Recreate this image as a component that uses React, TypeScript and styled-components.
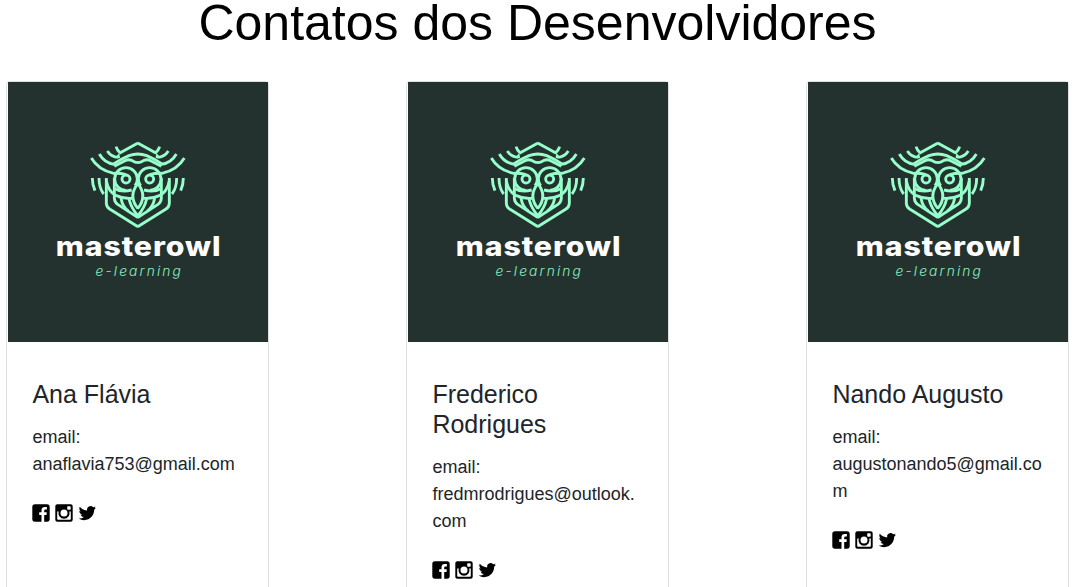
import React from 'react';
import styled, { createGlobalStyle } from 'styled-components';

const GlobalStyle = createGlobalStyle`
  *, *::before, *::after { box-sizing: border-box; }
  html, body { height: 100%; }
  body {
    margin: 0;
    overflow: hidden;
    background: #fff;
    color: #212529;
    font-family: "Liberation Sans", Arial, sans-serif;
  }
`;

const Page = styled.main`
  height: 587px;
  overflow: hidden;
`;

const Title = styled.h1`
  margin: 0;
  padding: 1px 0 0 1px;
  height: 81px;
  font-size: 50px;
  line-height: 44px;
  font-weight: 400;
  text-align: center;
  color: #000;
`;

const CardGrid = styled.section`
  display: grid;
  grid-template-columns: repeat(3, 263px);
  column-gap: 137px;
  padding-left: 6px;
`;

const Card = styled.article`
  height: 560px;
  border: 1px solid #dfdfdf;
  border-radius: 4px 4px 0 0;
`;

const Cover = styled.div`
  display: flex;
  flex-direction: column;
  align-items: center;
  width: 260px;
  height: 260px;
  margin-left: 1px;
  padding-top: 48px;
  background: #23322f;
`;

const OwlSvg = styled.svg`
  display: block;
  width: 120px;
  height: 102px;
  flex: none;
  fill: none;
  stroke: #96ffca;
  stroke-width: 8.6;
`;

const Brand = styled.div`
  height: 30px;
  font: 800 26.5px/29px Inter, sans-serif;
  letter-spacing: 0.8px;
  margin-right: -0.8px;
  white-space: nowrap;
  color: #fff;
  transform: scaleX(1.14);
`;

const Tagline = styled.div`
  height: 18px;
  font: italic 300 13px/18px Inter, sans-serif;
  letter-spacing: 2px;
  margin-right: -2px;
  white-space: nowrap;
  color: #8df2c0;
  transform: scaleX(1.06);
`;

const CardBody = styled.div`
  padding: 37px 25px 0 25.4px;
`;

const Name = styled.h2`
  margin: 0 0 15px;
  font-size: 25px;
  line-height: 30px;
  font-weight: 400;
`;

const Email = styled.p`
  margin: 0 0 26px;
  font-size: 18px;
  line-height: 27px;
  overflow-wrap: anywhere;
`;

const Socials = styled.div`
  display: flex;
  gap: 5px;
`;

const SocialIcon = styled.svg`
  display: block;
  width: 18px;
  height: 18px;
  fill: #000;
`;

const OwlHalf = () => (
  <g>
    <path d="M175 39 L119 70" />
    <path d="M109 50 Q112 60 121 68" />
    <path d="M83 63 Q94 81 116 82" />
    <path d="M106 84 L119 68 L121 84 Z" fill="#96ffca" stroke="none" />
    <path d="M59 72 Q74 99 104 103" />
    <path d="M35 84 Q56 120 102 130 Q122 129 139 134" />
    <path d="M100 103 Q120 89 148 77 Q161 72 175 72" />
    <path d="M104 109 Q120 100 136 92 Q146 87 156 91 Q166 98 175 98" />
    <path d="M173 147 A34 34 0 1 0 139 181" />
    <path d="M173 147 Q173 158 166 167" />
    <circle cx="139" cy="147" r="12" />
    <path d="M38 144 Q38 165 46 182" />
    <path d="M58 144 Q58 174 72 192" />
    <path d="M80 144 V220 Q81 232 91 238 L175 290" />
    <path d="M80 152 Q86 184 108 196 Q130 207 158 205" />
    <path d="M104 144 V205 Q105 217 114 223 L175 263" />
    <path d="M106 176 Q126 188 156 180" />
    <path d="M124 204 Q128 230 146 243" />
    <path d="M148 207 Q154 233 175 258" />
    <path d="M175 160 Q144 198 175 236" />
  </g>
);

const Owl = () => (
  <OwlSvg viewBox="-5 0 360 306">
    <OwlHalf />
    <g transform="translate(349 0) scale(-1 1)">
      <OwlHalf />
    </g>
  </OwlSvg>
);

const Facebook = () => (
  <SocialIcon viewBox="0 0 18 18" aria-label="Facebook">
    <path d="M3 0.3H15Q17.7 .3 17.7 3V15Q17.7 17.7 15 17.7H12.2V11H14.5L14.8 8.3H12.2V6.7Q12.2 5.5 13.4 5.5H14.9V3.1Q14 3 12.9 3Q9.5 3 9.5 6.4V8.3H7.2V11H9.5V17.7H3Q.3 17.7 .3 15V3Q.3 .3 3 .3Z" />
  </SocialIcon>
);

const Instagram = () => (
  <SocialIcon viewBox="0 0 18 18" aria-label="Instagram">
    <path
      fillRule="evenodd"
      d="M2.3 .3H15.7Q17.7 .3 17.7 2.3V15.7Q17.7 17.7 15.7 17.7H2.3Q.3 17.7 .3 15.7V2.3Q.3 .3 2.3 .3ZM2.2 7.5V15Q2.2 15.8 3 15.8H15Q15.8 15.8 15.8 15V7.5H14.2A5.5 5.5 0 1 1 3.8 7.5ZM12.9 2.3Q12.2 2.3 12.2 3V5Q12.2 5.7 12.9 5.7H15Q15.7 5.7 15.7 5V3Q15.7 2.3 15 2.3ZM9 5.5A3.5 3.5 0 1 0 9 12.5A3.5 3.5 0 1 0 9 5.5Z"
    />
  </SocialIcon>
);

const Twitter = () => (
  <SocialIcon viewBox="-0.9 -0.7 25 25" aria-label="Twitter">
    <path d="M23.953 4.57a10 10 0 01-2.825.775 4.958 4.958 0 002.163-2.723c-.951.555-2.005.959-3.127 1.184a4.92 4.92 0 00-8.384 4.482C7.69 8.095 4.067 6.13 1.64 3.162a4.822 4.822 0 00-.666 2.475c0 1.71.87 3.213 2.188 4.096a4.904 4.904 0 01-2.228-.616v.06a4.923 4.923 0 003.946 4.827 4.996 4.996 0 01-2.212.085 4.936 4.936 0 004.604 3.417 9.867 9.867 0 01-6.102 2.105c-.39 0-.779-.023-1.17-.067a13.995 13.995 0 007.557 2.209c9.053 0 13.998-7.496 13.998-13.985 0-.21 0-.42-.015-.63A9.935 9.935 0 0024 4.59z" />
  </SocialIcon>
);

const developers = [
  { name: 'Ana Flávia', email: 'anaflavia753@gmail.com' },
  { name: 'Frederico Rodrigues', email: 'fredmrodrigues@outlook.com' },
  { name: 'Nando Augusto', email: 'augustonando5@gmail.com' },
];

export default function App() {
  return (
    <Page>
      <GlobalStyle />
      <Title>Contatos dos Desenvolvidores</Title>
      <CardGrid>
        {developers.map((dev) => (
          <Card key={dev.email}>
            <Cover>
              <Owl />
              <Brand>masterowl</Brand>
              <Tagline>e-learning</Tagline>
            </Cover>
            <CardBody>
              <Name>{dev.name}</Name>
              <Email>
                email:
                <br />
                {dev.email}
              </Email>
              <Socials>
                <Facebook />
                <Instagram />
                <Twitter />
              </Socials>
            </CardBody>
          </Card>
        ))}
      </CardGrid>
    </Page>
  );
}
